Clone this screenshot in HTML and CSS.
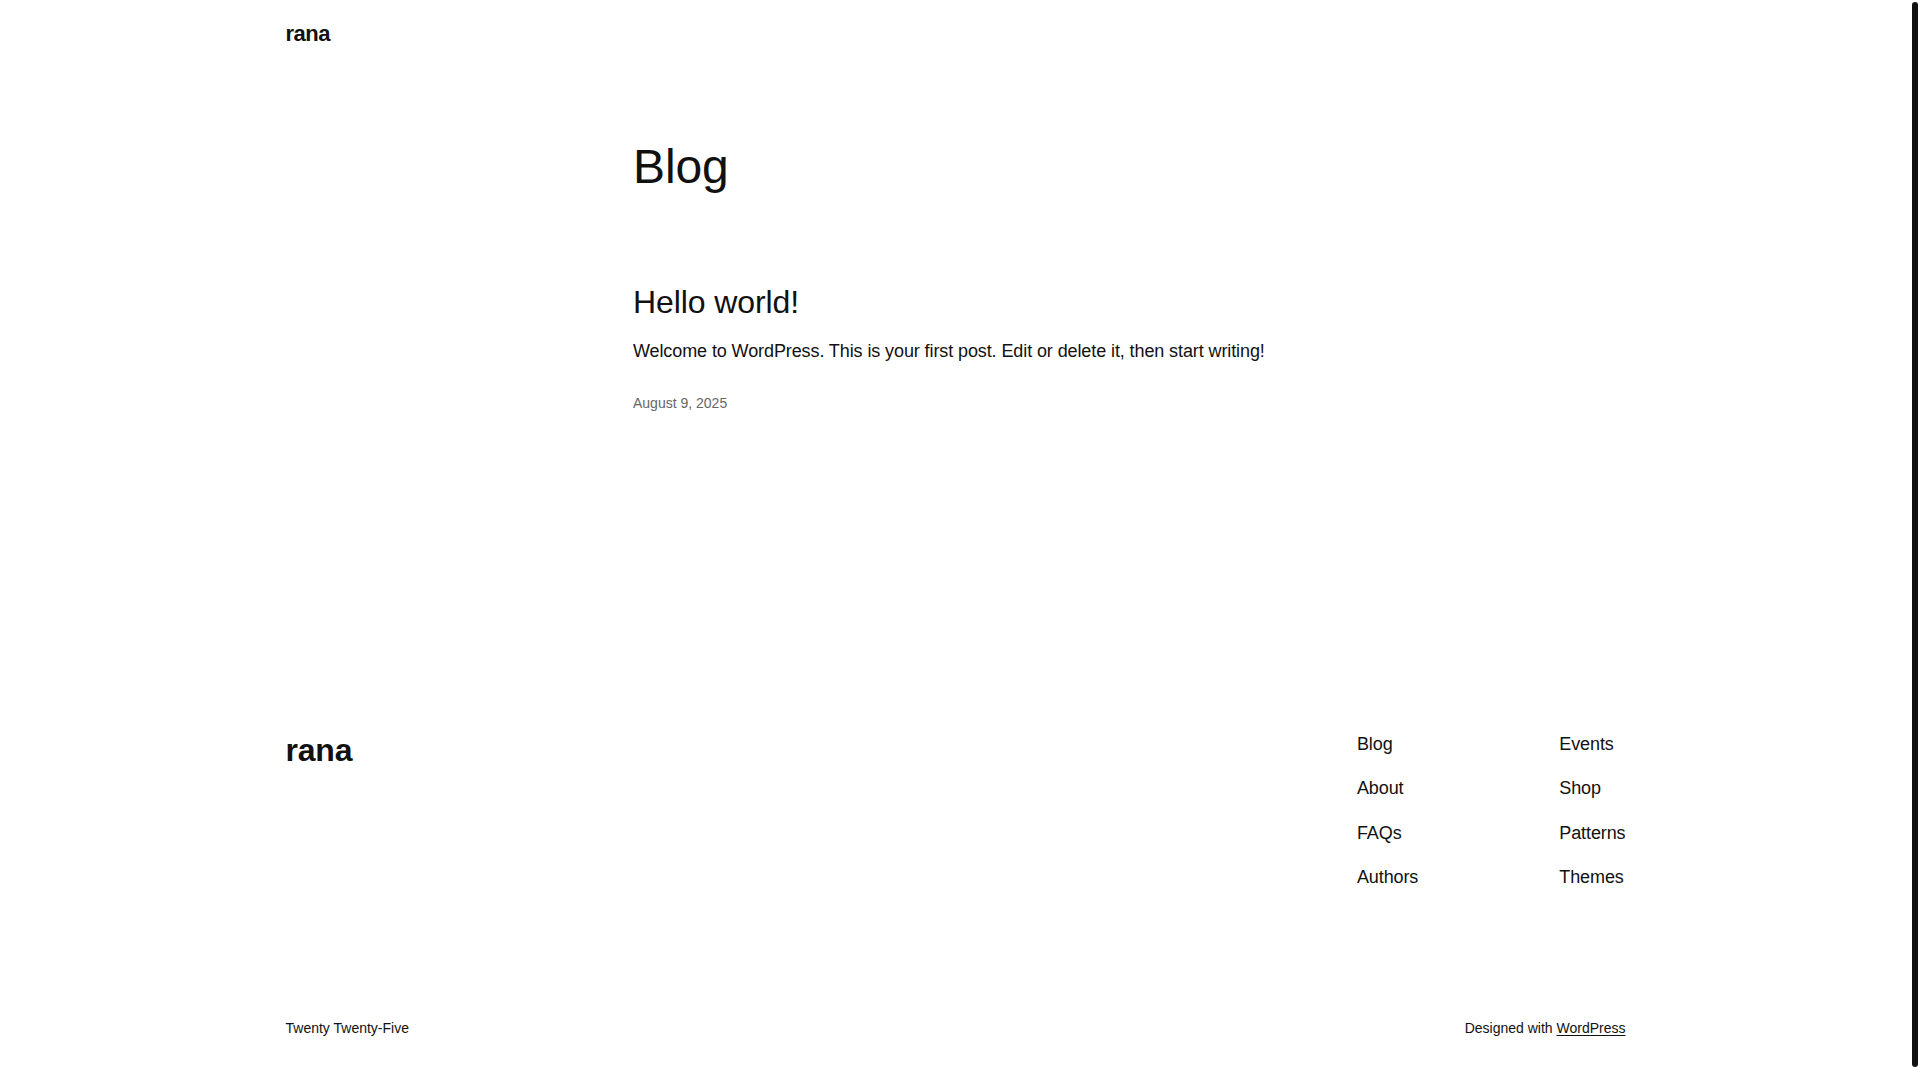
FILE: index.html
```html
<!DOCTYPE html>
<html lang="en">
<head>
<meta charset="utf-8">
<title>Blog – rana</title>
<link rel="stylesheet" href="styles.css">
</head>
<body>
<div class="site">
  <header class="site-header">
    <div class="wide">
      <a class="site-title site-title--header" href="#">rana</a>
    </div>
  </header>

  <main class="site-main">
    <div class="content">
      <h1 class="page-title">Blog</h1>
      <article class="post">
        <h2 class="post-title"><a href="#">Hello world!</a></h2>
        <p class="post-excerpt">Welcome to WordPress. This is your first post. Edit or delete it, then start writing!</p>
        <time class="post-date" datetime="2025-08-09">August 9, 2025</time>
      </article>
    </div>
  </main>

  <footer class="site-footer">
    <div class="wide">
      <div class="footer-top">
        <a class="site-title site-title--footer" href="#">rana</a>
        <div class="footer-navs">
          <nav class="footer-nav">
            <a href="#">Blog</a>
            <a href="#">About</a>
            <a href="#">FAQs</a>
            <a href="#">Authors</a>
          </nav>
          <nav class="footer-nav">
            <a href="#">Events</a>
            <a href="#">Shop</a>
            <a href="#">Patterns</a>
            <a href="#">Themes</a>
          </nav>
        </div>
      </div>
      <div class="footer-bottom">
        <span class="footer-small">Twenty Twenty-Five</span>
        <span class="footer-small">Designed with <a class="credit-link" href="#">WordPress</a></span>
      </div>
    </div>
  </footer>
</div>
<div class="scroll-thumb" aria-hidden="true"></div>
</body>
</html>
```

FILE: styles.css
```css
html {
  background: #ffffff;
}

body {
  margin: 0;
  padding-right: 9px;
  font-family: "Liberation Sans", Arial, Helvetica, sans-serif;
  color: #111111;
  background: #ffffff;
}

a {
  color: inherit;
  text-decoration: none;
}

/* decorative scrollbar thumb (browser chrome in the reference) */
.scroll-thumb {
  position: fixed;
  top: 2px;
  right: 2px;
  width: 6px;
  height: 1065px;
  border-radius: 3px;
  background: #111111;
}

.wide {
  width: 1340px;
  margin: 0 auto;
}

.content {
  width: 645px;
  margin: 0 auto;
}

/* Header */
.site-header {
  padding: 21px 0 21px;
}

.site-title {
  display: block;
  width: max-content;
  font-weight: 700;
  letter-spacing: -0.5px;
}

.site-title--header {
  font-size: 22px;
  line-height: 26px;
}

/* Main */
.site-main {
  padding-top: 69.6px;
}

.page-title {
  margin: 0;
  font-size: 48px;
  line-height: 57.6px;
  font-weight: 400;
  letter-spacing: -0.1px;
}

.post {
  display: flex;
  flex-direction: column;
  align-items: flex-start;
  padding-top: 87.9px;
}

.post-title {
  margin: 0;
  font-size: 32px;
  line-height: 38.4px;
  font-weight: 400;
  letter-spacing: -0.1px;
}

.post-excerpt {
  margin: 15.4px 0 0;
  font-size: 18px;
  line-height: 28.8px;
  letter-spacing: -0.1px;
}

.post-date {
  margin-top: 28.2px;
  font-size: 14px;
  line-height: 19.6px;
  color: #666666;
}

/* Footer */
.site-footer {
  padding-top: 315.7px;
  padding-bottom: 55px;
}

.footer-top {
  display: flex;
  justify-content: space-between;
  align-items: flex-start;
}

.site-title--footer {
  font-size: 32px;
  line-height: 42px;
  letter-spacing: -0.2px;
}

.footer-navs {
  display: flex;
  gap: 141px;
  padding-top: 1.5px;
}

.footer-nav {
  display: flex;
  flex-direction: column;
  gap: 17.5px;
}

.footer-nav a {
  font-size: 18px;
  line-height: 27px;
  letter-spacing: -0.1px;
}

.footer-bottom {
  display: flex;
  justify-content: space-between;
  margin-top: 127.5px;
}

.footer-small {
  font-size: 14px;
  line-height: 19.6px;
}

.credit-link {
  text-decoration: underline;
  text-underline-offset: 2px;
}
```
